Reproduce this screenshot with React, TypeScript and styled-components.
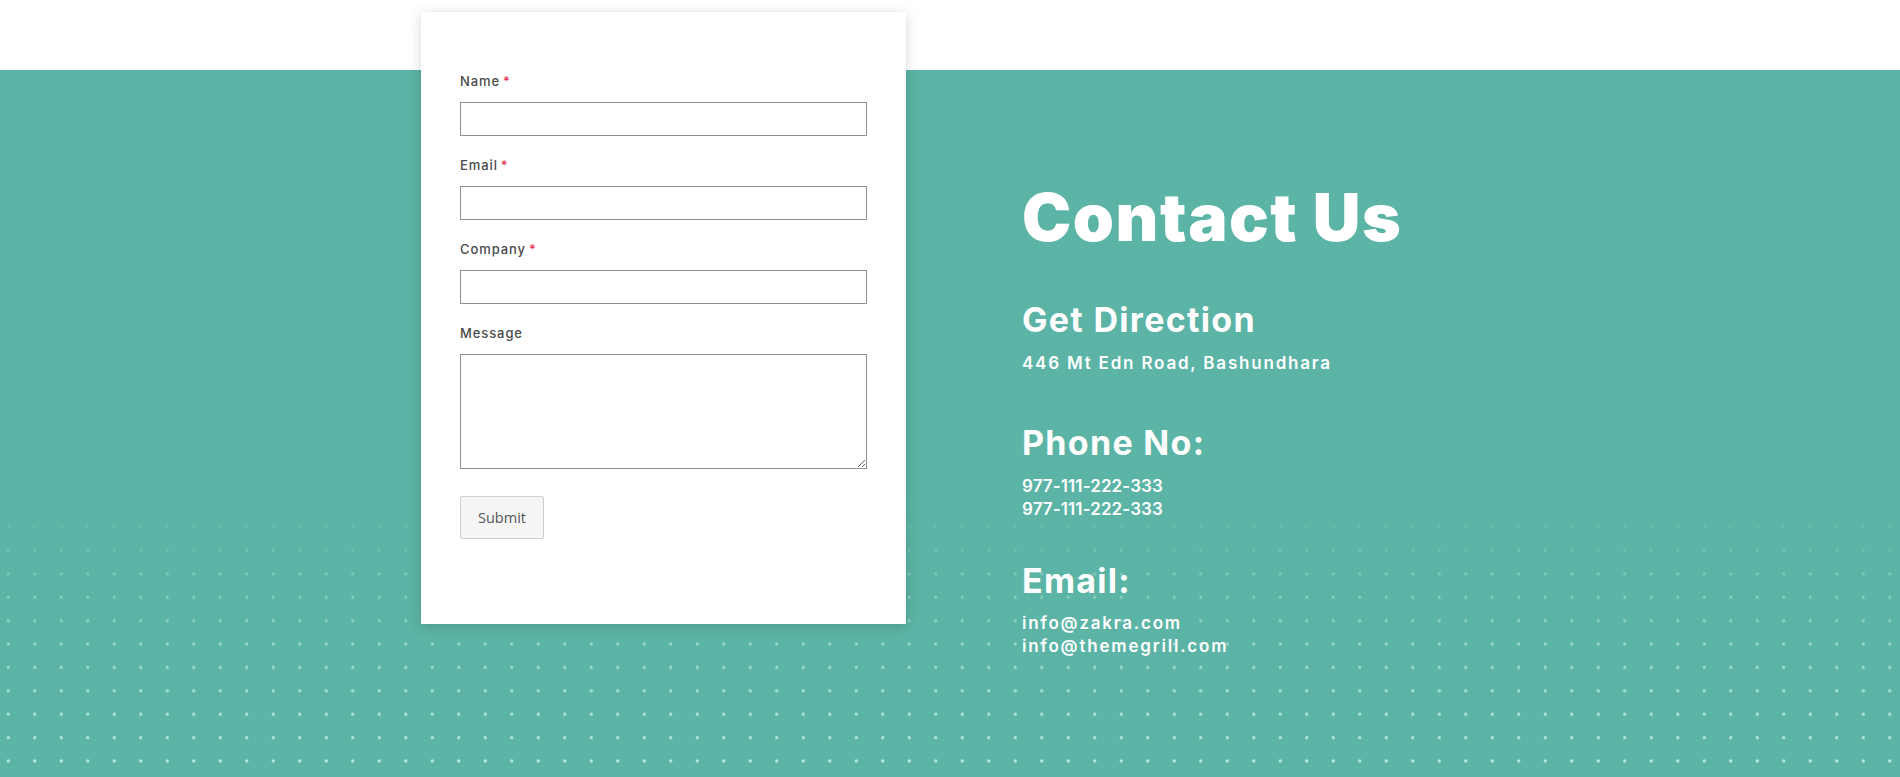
import React from "react";
import styled, { createGlobalStyle } from "styled-components";

const GlobalStyle = createGlobalStyle`
  html, body { margin: 0; padding: 0; }
  body { font-family: Inter, "Noto Sans", sans-serif; background: #5bb4a5; }
  * { box-sizing: border-box; }
`;

const Page = styled.section`
  position: relative;
  min-height: 777px;
  overflow: hidden;
  background: linear-gradient(to bottom, #ffffff 0, #ffffff 70px, #5bb4a5 70px);
  &::before {
    content: "";
    position: absolute;
    left: 0;
    right: 0;
    top: 490px;
    bottom: 0;
    background-image: radial-gradient(circle, rgba(200, 245, 232, 0.85) 1.2px, rgba(200, 245, 232, 0) 2px);
    background-size: 26.5px 23.4px;
    background-position: -5px 2px;
    -webkit-mask-image: linear-gradient(to bottom, transparent 0, rgba(0,0,0,0.45) 100px, #000 250px);
    mask-image: linear-gradient(to bottom, transparent 0, rgba(0,0,0,0.45) 100px, #000 250px);
  }
`;

const Row = styled.div`
  position: relative;
  z-index: 1;
  display: flex;
  align-items: flex-start;
  gap: 116px;
  padding: 12px 0 0 421px;
`;

const Card = styled.form`
  width: 485px;
  height: 612px;
  background: #ffffff;
  padding: 59px 39px 0;
  box-shadow: 0 2px 12px rgba(0, 0, 0, 0.16);
  display: flex;
  flex-direction: column;
`;

const Field = styled.div`
  display: flex;
  flex-direction: column;
  margin-bottom: 19px;
`;

const Label = styled.label`
  font-family: Inter, "Noto Sans", sans-serif;
  font-size: 13px;
  font-weight: 500;
  letter-spacing: 0.9px;
  line-height: 20px;
  color: #4a4a4a;
  margin-bottom: 11px;
`;

const Req = styled.span`
  color: #e2364f;
  margin-left: 3px;
`;

const Input = styled.input`
  height: 34px;
  width: 100%;
  border: 1px solid #8f8f8f;
  border-radius: 0;
  background: #fff;
  outline: none;
`;

const TextArea = styled.textarea`
  height: 115px;
  width: 100%;
  border: 1px solid #8f8f8f;
  border-radius: 0;
  background: #fff;
  outline: none;
`;

const Submit = styled.button`
  align-self: flex-start;
  margin-top: 8px;
  height: 43px;
  padding: 0 17px;
  border: 1px solid #cfcfcf;
  border-radius: 2px;
  background: #f5f5f5;
  color: #555;
  font-family: "Open Sans", Inter, sans-serif;
  font-size: 14.5px;
  cursor: pointer;
`;

const Info = styled.div`
  padding-top: 172px;
  color: #ffffff;
  display: flex;
  flex-direction: column;
`;

const Title = styled.h1`
  margin: 0;
  font-family: Inter, "Noto Sans", sans-serif;
  font-weight: 900;
  font-size: 66px;
  line-height: 66px;
  letter-spacing: 1.5px;
`;

const SubTitle = styled.h3<{ $gap: number }>`
  margin: ${(p) => p.$gap}px 0 0;
  font-family: Inter, "Noto Sans", sans-serif;
  font-weight: 700;
  font-size: 34px;
  line-height: 40px;
  letter-spacing: 1.3px;
`;

const Text = styled.p<{ $gap: number; $spacing?: number }>`
  margin: ${(p) => p.$gap}px 0 0;
  font-family: Inter, "Noto Sans", sans-serif;
  font-weight: 600;
  font-size: 17px;
  line-height: 23px;
  letter-spacing: ${(p) => p.$spacing ?? 1.8}px;
`;

export default function App() {
  return (
    <>
      <GlobalStyle />
      <Page>
        <Row>
          <Card onSubmit={(e) => e.preventDefault()}>
            <Field>
              <Label>
                Name<Req>*</Req>
              </Label>
              <Input type="text" />
            </Field>
            <Field>
              <Label>
                Email<Req>*</Req>
              </Label>
              <Input type="email" />
            </Field>
            <Field>
              <Label>
                Company<Req>*</Req>
              </Label>
              <Input type="text" />
            </Field>
            <Field>
              <Label>Message</Label>
              <TextArea />
            </Field>
            <Submit type="submit">Submit</Submit>
          </Card>
          <Info>
            <Title>Contact Us</Title>
            <SubTitle $gap={50}>Get Direction</SubTitle>
            <Text $gap={12}>446 Mt Edn Road, Bashundhara</Text>
            <SubTitle $gap={48}>Phone No:</SubTitle>
            <Text $gap={12} $spacing={0.1}>
              977-111-222-333
              <br />
              977-111-222-333
            </Text>
            <SubTitle $gap={40}>Email:</SubTitle>
            <Text $gap={11}>
              info@zakra.com
              <br />
              info@themegrill.com
            </Text>
          </Info>
        </Row>
      </Page>
    </>
  );
}
